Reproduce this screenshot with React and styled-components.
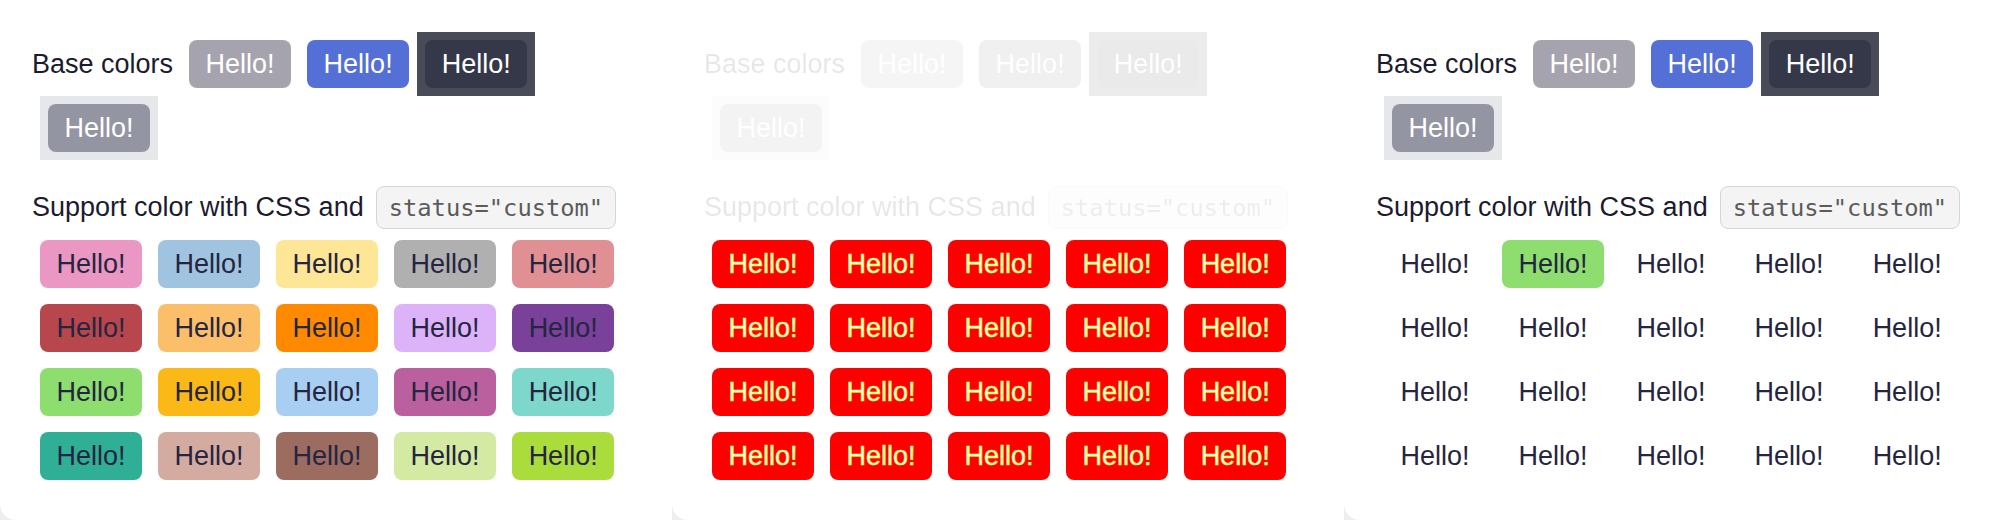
import React from 'react';
import styled, { createGlobalStyle } from 'styled-components';

const Global = createGlobalStyle`
  html, body { margin: 0; padding: 0; background: #eeeeee; }
  body { font-family: "Liberation Sans", Arial, sans-serif; }
`;

const Page = styled.div`
  display: flex;
  width: 2016px;
  height: 520px;
  overflow: hidden;
`;

const Panel = styled.section`
  flex: none;
  width: 672px;
  height: 520px;
  box-sizing: border-box;
  padding: 32px 32px 0 32px;
  background: #ffffff;
  border-bottom-left-radius: 16px;
`;

const Faded = styled.div`
  opacity: ${(p) => (p.$faded ? 0.1 : 1)};
  filter: ${(p) => (p.$faded ? 'grayscale(1)' : 'none')};
`;

const BaseRow = styled.div`
  display: flex;
  flex-wrap: wrap;
  align-items: center;
`;

const Label = styled.span`
  font-size: 27px;
  line-height: 1;
  color: #1b1b30;
  margin-right: ${(p) => p.$gap || '8px'};
  white-space: nowrap;
`;

const Button = styled.span`
  display: inline-flex;
  align-items: center;
  justify-content: center;
  box-sizing: border-box;
  height: 48px;
  margin: 8px;
  padding: 0 16.5px;
  border-radius: 8px;
  font-size: 27px;
  white-space: nowrap;
  color: ${(p) => p.$fg || '#ffffff'};
  background: ${(p) => p.$bg || 'transparent'};
  ${(p) => p.$stroke && `-webkit-text-stroke: 0.6px ${p.$stroke}; -webkit-font-smoothing: none;`}
`;

const Box = styled.div`
  display: flex;
  background: ${(p) => p.$bg};
  margin-left: ${(p) => (p.$indent ? '8px' : '0')};
`;

const SupportRow = styled.div`
  display: flex;
  align-items: center;
  height: 43px;
  margin-top: 26px;
`;

const Code = styled.code`
  display: inline-flex;
  align-items: center;
  box-sizing: border-box;
  height: 43px;
  padding: 0 12px;
  border: 1.5px solid #d6d6d6;
  border-radius: 8px;
  background: #f4f4f4;
  color: #5b5b5b;
  font-family: "DejaVu Sans Mono", "Liberation Mono", monospace;
  font-size: 23.75px;
`;

const Grid = styled.div`
  display: grid;
  grid-template-columns: repeat(5, max-content);
  margin-top: 3px;
`;

const palette = [
  '#ea98c3', '#a0c4df', '#fde696', '#b0b0b0', '#e09093',
  '#b8474d', '#fbbf6a', '#ff8a00', '#dcb3f8', '#79419a',
  '#8ddd6f', '#fbb917', '#a8cff2', '#bb609f', '#7dd7ca',
  '#30af97', '#d4aba0', '#9d6c61', '#d4e9a2', '#aadc3c',
];

function BaseSection({ faded }) {
  return (
    <Faded $faded={faded}>
      <BaseRow>
        <Label>Base colors</Label>
        <Button $bg="#a5a4ae">Hello!</Button>
        <Button $bg="#5470d6">Hello!</Button>
        <Box $bg="#474c58">
          <Button $bg="#343849">Hello!</Button>
        </Box>
        <Box $bg="#e6e7eb" $indent>
          <Button $bg="#9495a2">Hello!</Button>
        </Box>
      </BaseRow>
      <SupportRow>
        <Label $gap="12px">Support color with CSS and</Label>
        <Code>status="custom"</Code>
      </SupportRow>
    </Faded>
  );
}

function ColorPanel() {
  return (
    <Panel>
      <BaseSection />
      <Grid>
        {palette.map((c, i) => (
          <Button key={i} $bg={c} $fg="#25253f">Hello!</Button>
        ))}
      </Grid>
    </Panel>
  );
}

function DiffPanel() {
  return (
    <Panel>
      <BaseSection faded />
      <Grid>
        {palette.map((c, i) => (
          <Button key={i} $bg="#ff0000" $fg="#ffffff" $stroke="#ffff00">Hello!</Button>
        ))}
      </Grid>
    </Panel>
  );
}

function PlainPanel() {
  return (
    <Panel>
      <BaseSection />
      <Grid>
        {palette.map((c, i) => (
          <Button key={i} $bg={i === 1 ? '#8ddd6f' : 'transparent'} $fg="#25253f">Hello!</Button>
        ))}
      </Grid>
    </Panel>
  );
}

export default function App() {
  return (
    <>
      <Global />
      <Page>
        <ColorPanel />
        <DiffPanel />
        <PlainPanel />
      </Page>
    </>
  );
}
